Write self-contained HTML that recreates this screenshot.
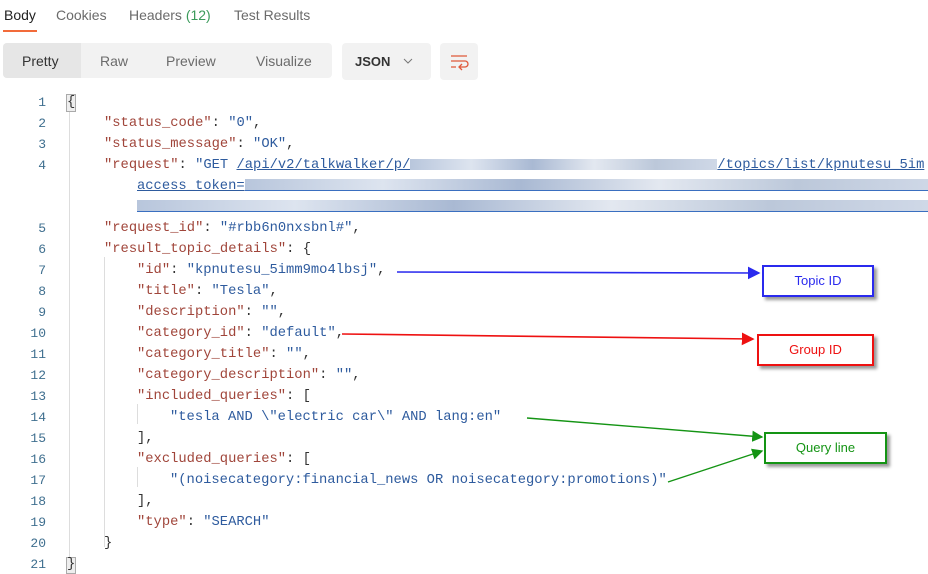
<!DOCTYPE html>
<html><head><meta charset="utf-8"><style>
body{margin:0;width:928px;height:572px;background:#fff;overflow:hidden;position:relative;font-family:"Liberation Sans",sans-serif}
.tab{position:absolute;top:7px;font-size:14px;color:#6b6b6b}
.ln{position:absolute;left:0;width:46px;text-align:right;font:13px "Liberation Mono",monospace;color:#3f6f8f}
.cd{position:absolute;font:13.8px "Liberation Mono",monospace;color:#333;white-space:pre;margin-top:1px}
.k{color:#a0453a}.s{color:#2e5b9e}
.guide{position:absolute;width:1px;background:#ddd}
.blur{display:inline-block;height:11px;vertical-align:middle;background:linear-gradient(90deg,#b8c6dc,#dde4ef,#a9b9d3,#e3e8f0,#bcc8da,#cfd8e7);}
.box{position:absolute;font-size:13px;text-align:center;box-shadow:3px 3px 3px #999;background:#fff}
</style></head><body>
<div class="tab" style="left:4px;color:#222">Body</div>
<div style="position:absolute;left:3px;top:30px;width:34px;height:2px;background:#f26b3a"></div>
<div class="tab" style="left:56px">Cookies</div>
<div class="tab" style="left:129px">Headers <span style="color:#3a9a5a">(12)</span></div>
<div class="tab" style="left:234px">Test Results</div>

<div style="position:absolute;left:3px;top:43px;width:329px;height:35px;background:#f2f2f2;border-radius:4px"></div>
<div style="position:absolute;left:3px;top:43px;width:78px;height:35px;background:#e6e6e6;border-radius:4px 0 0 4px"></div>
<div class="tab" style="left:22px;top:53px;color:#333">Pretty</div>
<div class="tab" style="left:100px;top:53px">Raw</div>
<div class="tab" style="left:166px;top:53px">Preview</div>
<div class="tab" style="left:256px;top:53px">Visualize</div>
<div style="position:absolute;left:342px;top:43px;width:89px;height:37px;background:#f2f2f2;border-radius:4px"></div>
<div style="position:absolute;left:355px;top:54px;font-size:13px;font-weight:bold;color:#333">JSON</div>
<svg style="position:absolute;left:403px;top:57px" width="10" height="8"><path d="M1 2l4 4 4-4" stroke="#777" fill="none"/></svg>
<div style="position:absolute;left:440px;top:43px;width:38px;height:37px;background:#f2f2f2;border-radius:4px"></div>
<svg style="position:absolute;left:449px;top:53px" width="20" height="18"><path d="M2 3h16M2 8h14a3 3 0 0 1 0 6h-6M13 11l-3 3 3 3M2 14h5" stroke="#e0583a" stroke-width="1.3" fill="none"/></svg>

<div class="guide" style="left:69px;top:110px;height:455px"></div>
<div class="guide" style="left:104px;top:257px;height:290px"></div>
<div class="guide" style="left:137px;top:404px;height:20px"></div>
<div class="guide" style="left:137px;top:467px;height:20px"></div>
<div style="position:absolute;left:66px;top:94px;width:8px;height:16px;border:1px solid #aaa;background:#eee"></div>
<div style="position:absolute;left:66px;top:557px;width:8px;height:15px;border:1px solid #aaa;background:#eee"></div>

<div class="ln" style="top:95px">1</div><div class="cd" style="left:67px;top:94px">{</div>
<div class="ln" style="top:116px">2</div><div class="cd" style="left:104px;top:115px"><span class="k">"status_code"</span>: <span class="s">"0"</span>,</div>
<div class="ln" style="top:137px">3</div><div class="cd" style="left:104px;top:136px"><span class="k">"status_message"</span>: <span class="s">"OK"</span>,</div>
<div class="ln" style="top:158px">4</div><div class="cd" style="left:104px;top:157px"><span class="k">"request"</span>: <span class="s">"GET <u>/api/v2/talkwalker/p/<span class="blur" style="width:307px"></span>/topics/list/kpnutesu_5im</u></span></div>
<div class="cd s" style="left:137px;top:178px"><u>access_token=</u><span class="blur" style="width:690px;border-bottom:1px solid #3a6fc0"></span></div>
<div class="cd s" style="left:137px;top:199px"><span class="blur" style="width:791px;border-bottom:1px solid #3a6fc0"></span></div>
<div class="ln" style="top:221px">5</div><div class="cd" style="left:104px;top:220px"><span class="k">"request_id"</span>: <span class="s">"#rbb6n0nxsbnl#"</span>,</div>
<div class="ln" style="top:242px">6</div><div class="cd" style="left:104px;top:241px"><span class="k">"result_topic_details"</span>: {</div>
<div class="ln" style="top:263px">7</div><div class="cd" style="left:137px;top:262px"><span class="k">"id"</span>: <span class="s">"kpnutesu_5imm9mo4lbsj"</span>,</div>
<div class="ln" style="top:284px">8</div><div class="cd" style="left:137px;top:283px"><span class="k">"title"</span>: <span class="s">"Tesla"</span>,</div>
<div class="ln" style="top:305px">9</div><div class="cd" style="left:137px;top:304px"><span class="k">"description"</span>: <span class="s">""</span>,</div>
<div class="ln" style="top:326px">10</div><div class="cd" style="left:137px;top:325px"><span class="k">"category_id"</span>: <span class="s">"default"</span>,</div>
<div class="ln" style="top:347px">11</div><div class="cd" style="left:137px;top:346px"><span class="k">"category_title"</span>: <span class="s">""</span>,</div>
<div class="ln" style="top:368px">12</div><div class="cd" style="left:137px;top:367px"><span class="k">"category_description"</span>: <span class="s">""</span>,</div>
<div class="ln" style="top:389px">13</div><div class="cd" style="left:137px;top:388px"><span class="k">"included_queries"</span>: [</div>
<div class="ln" style="top:410px">14</div><div class="cd" style="left:170px;top:409px"><span class="s">"tesla AND \"electric car\" AND lang:en"</span></div>
<div class="ln" style="top:431px">15</div><div class="cd" style="left:137px;top:430px">],</div>
<div class="ln" style="top:452px">16</div><div class="cd" style="left:137px;top:451px"><span class="k">"excluded_queries"</span>: [</div>
<div class="ln" style="top:473px">17</div><div class="cd" style="left:170px;top:472px"><span class="s">"(noisecategory:financial_news OR noisecategory:promotions)"</span></div>
<div class="ln" style="top:494px">18</div><div class="cd" style="left:137px;top:493px">],</div>
<div class="ln" style="top:515px">19</div><div class="cd" style="left:137px;top:514px"><span class="k">"type"</span>: <span class="s">"SEARCH"</span></div>
<div class="ln" style="top:536px">20</div><div class="cd" style="left:104px;top:535px">}</div>
<div class="ln" style="top:557px">21</div><div class="cd" style="left:67px;top:556px">}</div>

<svg style="position:absolute;left:0;top:0" width="928" height="572">
<defs>
<marker id="mb" markerWidth="8" markerHeight="8" refX="7" refY="4" orient="auto"><path d="M0 0L8 4L0 8z" fill="#2a2aee"/></marker>
<marker id="mr" markerWidth="8" markerHeight="8" refX="7" refY="4" orient="auto"><path d="M0 0L8 4L0 8z" fill="#ee1111"/></marker>
<marker id="mg" markerWidth="8" markerHeight="8" refX="7" refY="4" orient="auto"><path d="M0 0L8 4L0 8z" fill="#149414"/></marker>
</defs>
<path d="M397 272L759 273" stroke="#2a2aee" stroke-width="1.6" marker-end="url(#mb)"/>
<path d="M342 334L753 339" stroke="#ee1111" stroke-width="1.6" marker-end="url(#mr)"/>
<path d="M527 418L762 437" stroke="#149414" stroke-width="1.4" marker-end="url(#mg)"/>
<path d="M668 482L762 451" stroke="#149414" stroke-width="1.4" marker-end="url(#mg)"/>
</svg>
<div class="box" style="left:762px;top:265px;width:108px;height:28px;line-height:28px;border:2px solid #2a2aee;color:#2a2aee">Topic ID</div>
<div class="box" style="left:757px;top:334px;width:113px;height:28px;line-height:28px;border:2px solid #ee1111;color:#ee1111">Group ID</div>
<div class="box" style="left:764px;top:432px;width:119px;height:28px;line-height:28px;border:2px solid #149414;color:#149414">Query line</div>
</body></html>
